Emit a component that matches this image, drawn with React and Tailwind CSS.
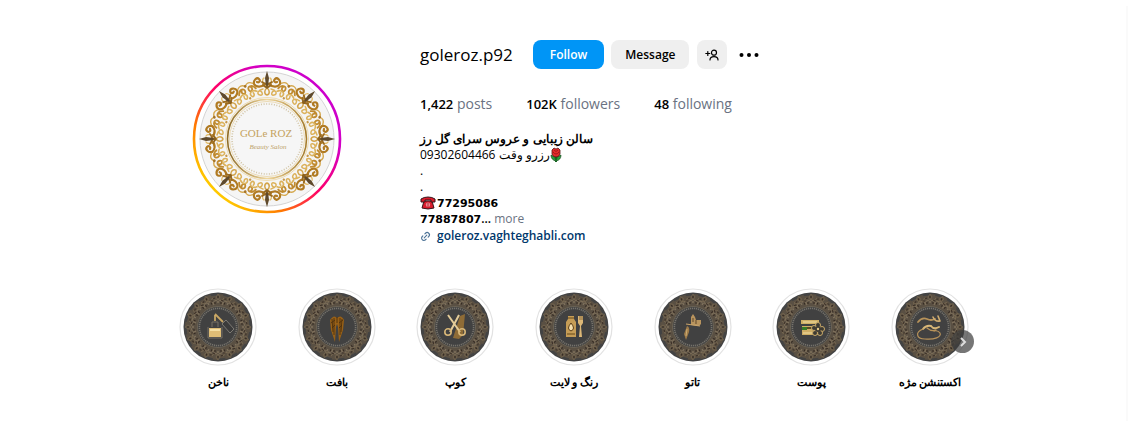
import { Link2 } from 'lucide-react';

const spin = (count) => Array.from({ length: count }, (_, i) => (360 / count) * i);

function Avatar() {
  return (
    <svg viewBox="-75 -75 150 150" className="block size-[150px] shrink-0" role="img" aria-label="GOLe ROZ">
      <defs>
        <linearGradient id="story" x1="0" y1="1" x2="1" y2="0">
          <stop offset="0.12" stopColor="#ffd600" />
          <stop offset="0.3" stopColor="#ff7a00" />
          <stop offset="0.5" stopColor="#ff0069" />
          <stop offset="0.72" stopColor="#d300c5" />
          <stop offset="0.95" stopColor="#c800d0" />
        </linearGradient>
        <linearGradient id="rim" x1="0" y1="0" x2="1" y2="0">
          <stop offset="0" stopColor="#8f6b24" />
          <stop offset="0.5" stopColor="#f0d79c" />
          <stop offset="1" stopColor="#a57c2c" />
        </linearGradient>
      </defs>
      <circle r="73" fill="none" stroke="url(#story)" strokeWidth="2.6" />
      <circle r="67" fill="#f5f5f5" stroke="#d4d4d4" strokeWidth="1" />
      {spin(8).map((angle) => (
        <g key={angle} transform={`rotate(${angle})`} fill="none" strokeLinecap="round">
          <path d="M-4-50C-9-49-11-45-7-44S-5-48-7-48M4-50C9-49 11-45 7-44S5-48 7-48" stroke="#dcb25c" strokeWidth="1.5" />
          <path d="M0-51C-3-49-3-45 0-44C3-45 3-49 0-51" stroke="#d3a44a" strokeWidth="1.5" />
          <path d="M-2-55C-6-51-11-52-13-55C-14-59-10-62-8-60C-6-58-8-56-10-57M2-55C6-51 11-52 13-55C14-59 10-62 8-60C6-58 8-56 10-57" stroke="#b07a22" strokeWidth="2.2" />
          <path d="M-3-53C-5-56-5-60-3-61M3-53C5-56 5-60 3-61" stroke="#e2bc6a" strokeWidth="1.4" />
          <path d="M-5-57Q0-53 5-57M-4-54Q0-50 4-54" stroke="#9a6a20" strokeWidth="1.8" />
          <path d="M0-68L2-61L1-53H-1L-2-61Z" fill="#5f4a2c" />
          <circle cy="-52" r="1.8" fill="#8b611f" />
        </g>
      ))}
      {spin(8).map((angle) => (
        <g key={angle} transform={`rotate(${angle + 22.5})`} fill="none" strokeLinecap="round">
          <path d="M-9-51C-7-57-1-56-2-52S-7-52-5-54M9-51C7-57 1-56 2-52S7-52 5-54" stroke="#c08b30" strokeWidth="1.8" />
          <path d="M-9-48C-5-52-1-49-2-46S-6-45-5-48M9-48C5-52 1-49 2-46S6-45 5-48" stroke="#dbb25c" strokeWidth="1.6" />
          <path d="M-8-57Q-4-61 0-57Q4-61 8-57" stroke="#d5a84e" strokeWidth="1.4" />
          <circle cy="-57" r="1.4" fill="#a87527" />
          <circle cy="-44" r="1.2" fill="#c6974a" />
        </g>
      ))}
      <circle r="41.5" fill="none" stroke="#f0dcae" strokeWidth="1" />
      <circle r="39.5" fill="#f6f6f6" stroke="url(#rim)" strokeWidth="1.6" />
      <circle r="37.5" fill="none" stroke="#e9d3a3" strokeWidth="0.8" />
      <circle r="35" fill="none" stroke="#d2c5a6" strokeWidth="1.6" strokeDasharray="1 1.6" />
      <text x="-1" y="-2" textAnchor="middle" fontSize="11" fill="#c5a25d" className="font-['Liberation_Serif',serif]">GOLe ROZ</text>
      <text x="1" y="10" textAnchor="middle" fontSize="7" fontStyle="italic" fill="#bda268" className="font-['Liberation_Serif',serif]">Beauty Salon</text>
    </svg>
  );
}

const art = {
  nails: (
    <>
      <path d="M-9 1H3V10H-9Z" fill="#dfbd76" />
      <path d="M-8 3H2" stroke="#f5dfa4" strokeWidth="2" />
      <path d="M-10 0V11H4V0M-6 0V-5H0V0" fill="none" stroke="#777166" strokeWidth="1" />
      <path d="M-3-13L5-5" stroke="#c9a663" strokeWidth="1.8" />
      <path d="M-3-12V-6" stroke="#d9b46b" strokeWidth="1.6" />
      <path d="M4-3L8-7L16 2L12 6Z" fill="#3b3b3b" stroke="#7d7a74" strokeWidth="1" />
    </>
  ),
  braid: (
    <>
      <path d="M-7-7Q-3-13 0-9Q4-13 7-7L6 3L2 15L1 0L0-3L-1 0L-2 15L-6 3Z" fill="#986016" />
      <path d="M-5-8L-4 5M-3-9V8M3-9V8M5-8L4 5M0-10V-4M-6-4L-2-7M2-4L6-7M-5 1L-2-2M2 1L5-2" stroke="#4e310d" strokeWidth="0.9" />
    </>
  ),
  scissors: (
    <>
      <path d="M5-11L10-13L8 8L4 12L-2 11Z" fill="#8f6c36" />
      <path d="M-7-12L5 5M4-12L-5 5" stroke="#e3cb98" strokeWidth="2" />
      <circle cx="-7" cy="5" r="3.2" fill="none" stroke="#d8b778" strokeWidth="1.6" />
      <circle cx="7" cy="5" r="3.2" fill="none" stroke="#d8b778" strokeWidth="1.6" />
    </>
  ),
  dye: (
    <>
      <path d="M-6-11H0V-8L2-5V10H-8V-5L-6-8Z" fill="#c69d56" />
      <path d="M-6-9H0M-7 7H1" stroke="#674819" strokeWidth="1" />
      <path d="M-3-4Q2 2-3 4Q-8 2-3-4" fill="#f6dfad" stroke="#5b3e18" strokeWidth="1" />
      <path d="M4-11H9L9-4L7-1L8 10H5L6-1L4-4Z" fill="#ddb877" />
      <path d="M6-11V-7M8-11V-7" stroke="#5e4522" strokeWidth="0.7" />
    </>
  ),
  tattoo: (
    <>
      <path d="M-2-4V-10L0-13L2-10L3-7H8V-3L6-1L-2-2Z" fill="#b8945e" />
      <path d="M-7-3L7-1" stroke="#c8a46b" strokeWidth="1.2" />
      <path d="M0-9V-5M3-7V-3" stroke="#5e462b" strokeWidth="1" />
      <path d="M-6-1Q-3 0-4 5L-7 13L-9 7Z" fill="#a07c49" />
      <path d="M-6 2L-7 9" stroke="#d6b880" strokeWidth="0.8" />
    </>
  ),
  skin: (
    <>
      <path d="M-10-7H8V-3H-10ZM-9-1H7V8H-9Z" fill="#cfae65" />
      <path d="M-8-5H6M-8 6H1" stroke="#f2dfa4" strokeWidth="1" />
      <path d="M-9 0H-4V3H-9Z" fill="#397b26" />
      <path d="M-4 1H3" stroke="#5b4a25" strokeWidth="2" />
      <g fill="#3d3a33" stroke="#c9a969" strokeWidth="1">
        <circle cx="7" cy="-2" r="2.5" /><circle cx="11" cy="2" r="2.5" /><circle cx="9" cy="6" r="2.5" />
        <circle cx="4" cy="6" r="2.5" /><circle cx="3" cy="1" r="2.5" />
      </g>
      <circle cx="7" cy="2" r="3" fill="#3d3a33" />
      <circle cx="7" cy="2" r="1.2" fill="#e6c987" />
    </>
  ),
  lashes: (
    <g fill="none" stroke="#b8935a" strokeLinecap="round">
      <path d="M-12-5Q-8-10-3-8Q1-6 5-8" strokeWidth="1.8" />
      <path d="M3-10Q5-5 10-6M8-11L10-6" stroke="#cfac70" strokeWidth="1.6" />
      <path d="M-7 2Q-4-2 1-1Q4 3 9 0" stroke="#d8b778" strokeWidth="2" />
      <path d="M-3 1Q2 5 6 3" strokeWidth="1.4" />
      <path d="M-7 2C-15 5-14 12-5 12C4 13 12 10 10 6Q8 3 4 4" strokeWidth="1.2" />
    </g>
  ),
};

const highlights = [
  ['ناخن', 'nails'],
  ['بافت', 'braid'],
  ['کوپ', 'scissors'],
  ['رنگ و لایت', 'dye'],
  ['تاتو', 'tattoo'],
  ['پوست', 'skin'],
  ['اکستنشن مژه', 'lashes'],
];

function Highlight({ label, icon }) {
  return (
    <a href="#" className="flex w-[78px] flex-col items-center gap-2">
      <svg viewBox="-39 -39 78 78" className="block size-[78px]" aria-hidden="true">
        <circle r="38" fill="#fff" stroke="#e2e2e2" strokeWidth="1.2" />
        <circle r="34.5" fill="#434343" />
        <circle r="26" fill="none" stroke="#5a5043" strokeWidth="11" />
        <circle r="31.5" fill="none" stroke="#5a5043" strokeWidth="3" strokeDasharray="5 7.37" />
        {spin(16).map((angle) => (
          <g key={angle} transform={`rotate(${angle})`} fill="none">
            <path d="M0-33L-2-30L0-27L2-30Z" stroke="#77674f" strokeWidth="0.8" />
            <path d="M-6-29Q-3-25 0-28Q3-25 6-29" stroke="#746650" strokeWidth="0.9" />
            <path d="M-4-22C-6-27 0-28 0-24C0-28 6-27 4-22" stroke="#857660" strokeWidth="0.8" />
            <path d="M0-31V-29M-3-25V-23M3-25V-23" stroke="#352a22" strokeWidth="1.1" />
            <path d="M-5-28L-3-29M5-26L3-27" stroke="#3a2e25" strokeWidth="1" />
          </g>
        ))}
        <circle r="20.5" fill="#414141" stroke="#6b6355" strokeWidth="1" />
        <circle r="18.6" fill="none" stroke="#75726b" strokeWidth="1.6" strokeDasharray="1.2 0.8" />
        {art[icon]}
      </svg>
      <span dir="rtl" className="text-[11px] leading-4 font-bold whitespace-nowrap">{label}</span>
    </a>
  );
}

function Rose() {
  return (
    <svg viewBox="0 0 12 16" className="h-4 w-3" role="img" aria-label="rose">
      <path d="M6 8V15" stroke="#176b21" strokeWidth="2" />
      <path d="M6 14Q1 13 1 8Q5 9 6 13Q7 9 11 8Q11 13 6 14Z" fill="#26a33a" stroke="#17491c" strokeWidth="0.7" />
      <path d="M2 3L4 1L6 2L8 1L10 3V7Q9 10 6 10Q3 10 2 7Z" fill="#e52b2b" stroke="#5a1515" strokeWidth="0.8" />
      <path d="M4 3Q6 6 8 3M3 5Q6 9 9 5" fill="none" stroke="#941818" strokeWidth="0.8" />
    </svg>
  );
}

function Phone() {
  return (
    <svg viewBox="0 0 16 14" className="h-[14px] w-4" role="img" aria-label="phone">
      <path d="M4 5H12L14 12Q8 14 2 12Z" fill="#d91b2b" stroke="#35161a" strokeWidth="1" />
      <path d="M1 6V3Q4 1 8 1T15 3V6H11V4H5V6Z" fill="#d91b2b" stroke="#35161a" strokeWidth="1" />
      <circle cx="8" cy="8.8" r="2.2" fill="#ed8a91" />
      <path d="M7 8H9M7 10H9" stroke="#a41423" strokeWidth="0.8" />
    </svg>
  );
}

function Stat({ value, label }) {
  return (
    <a href="#" className="text-sm leading-5 text-gray-500">
      <span className="text-[13px] font-semibold text-black">{value}</span> {label}
    </a>
  );
}

export default function App() {
  return (
    <main className="mt-1.5 min-h-[calc(100vh-6px)] border-r-2 border-[#fafafa] bg-white pl-[22px] font-['Open_Sans','Noto_Sans',sans-serif] text-black">
      <div className="mx-auto max-w-[790px] pt-[34px]">
        <header className="flex items-start gap-[78px] pl-[13px]">
          <div className="pt-6">
            <Avatar />
          </div>
          <section className="min-w-0">
            <div className="flex h-[29px] items-center">
              <h1 className="mr-5 text-[17px]">goleroz.p92</h1>
              <button type="button" className="mr-[7px] h-full rounded-lg bg-[#0095f6] px-[17px] text-xs font-semibold text-white">Follow</button>
              <button type="button" className="mr-2 h-full rounded-lg bg-[#efefef] px-[14px] text-xs font-semibold">Message</button>
              <button type="button" aria-label="Similar accounts" className="mr-3 flex h-full w-[30px] items-center justify-center rounded-lg bg-[#efefef]">
                <svg viewBox="0 0 14 12" className="h-3 w-[14px]" fill="none" stroke="#000" strokeWidth="1.2" strokeLinecap="round">
                  <circle cx="9" cy="3.7" r="2.5" />
                  <path d="M5 11Q5 7.6 9 7.6T13 11M.8 4.5H4.8M2.8 2.5V6.5" />
                </svg>
              </button>
              <button type="button" aria-label="Options">
                <svg viewBox="0 0 20 6" className="h-1.5 w-5">
                  <circle cx="2.5" cy="3" r="2" /><circle cx="10" cy="3" r="2" /><circle cx="17.5" cy="3" r="2" />
                </svg>
              </button>
            </div>

            <div className="mt-[25px] flex gap-[34px]">
              <Stat value="1,422" label="posts" />
              <Stat value="102K" label="followers" />
              <Stat value="48" label="following" />
            </div>

            <div className="mt-[17px] text-xs leading-4">
              <p dir="rtl" className="w-fit font-bold">سالن زیبایی و عروس سرای گل رز</p>
              <p dir="rtl" className="flex w-fit"><Rose /><span>رزرو وقت 09302604466</span></p>
              <p>.</p>
              <p>.</p>
              <p className="flex h-4 items-center gap-px">
                <Phone />
                <span className="pt-0.5 font-['DejaVu_Sans',sans-serif] text-[11px] font-bold">77295086</span>
              </p>
              <p>
                <span className="font-['DejaVu_Sans',sans-serif] text-[11px] font-bold">77887807</span>
                <span className="font-semibold">...</span> <button type="button" className="text-gray-500">more</button>
              </p>
              <a href="#" className="flex w-fit items-center gap-1.5 font-semibold text-[#00376b]">
                <Link2 className="size-[11px] -rotate-45 text-[#4d7397]" strokeWidth={2.4} />
                goleroz.vaghteghabli.com
              </a>
            </div>
          </section>
        </header>

        <div className="relative mt-11">
          <nav className="flex justify-between" aria-label="Highlights">
            {highlights.map(([label, icon]) => (
              <Highlight key={icon} label={label} icon={icon} />
            ))}
          </nav>
          <button type="button" aria-label="Next" className="absolute top-[42px] -right-[5px] flex size-[23px] items-center justify-center rounded-full bg-[#3c3c3c]/70">
            <svg viewBox="0 0 8 10" className="h-2.5 w-2" fill="none" stroke="#ddd" strokeWidth="2">
              <path d="M2 1L6 5L2 9" />
            </svg>
          </button>
        </div>
      </div>
    </main>
  );
}
